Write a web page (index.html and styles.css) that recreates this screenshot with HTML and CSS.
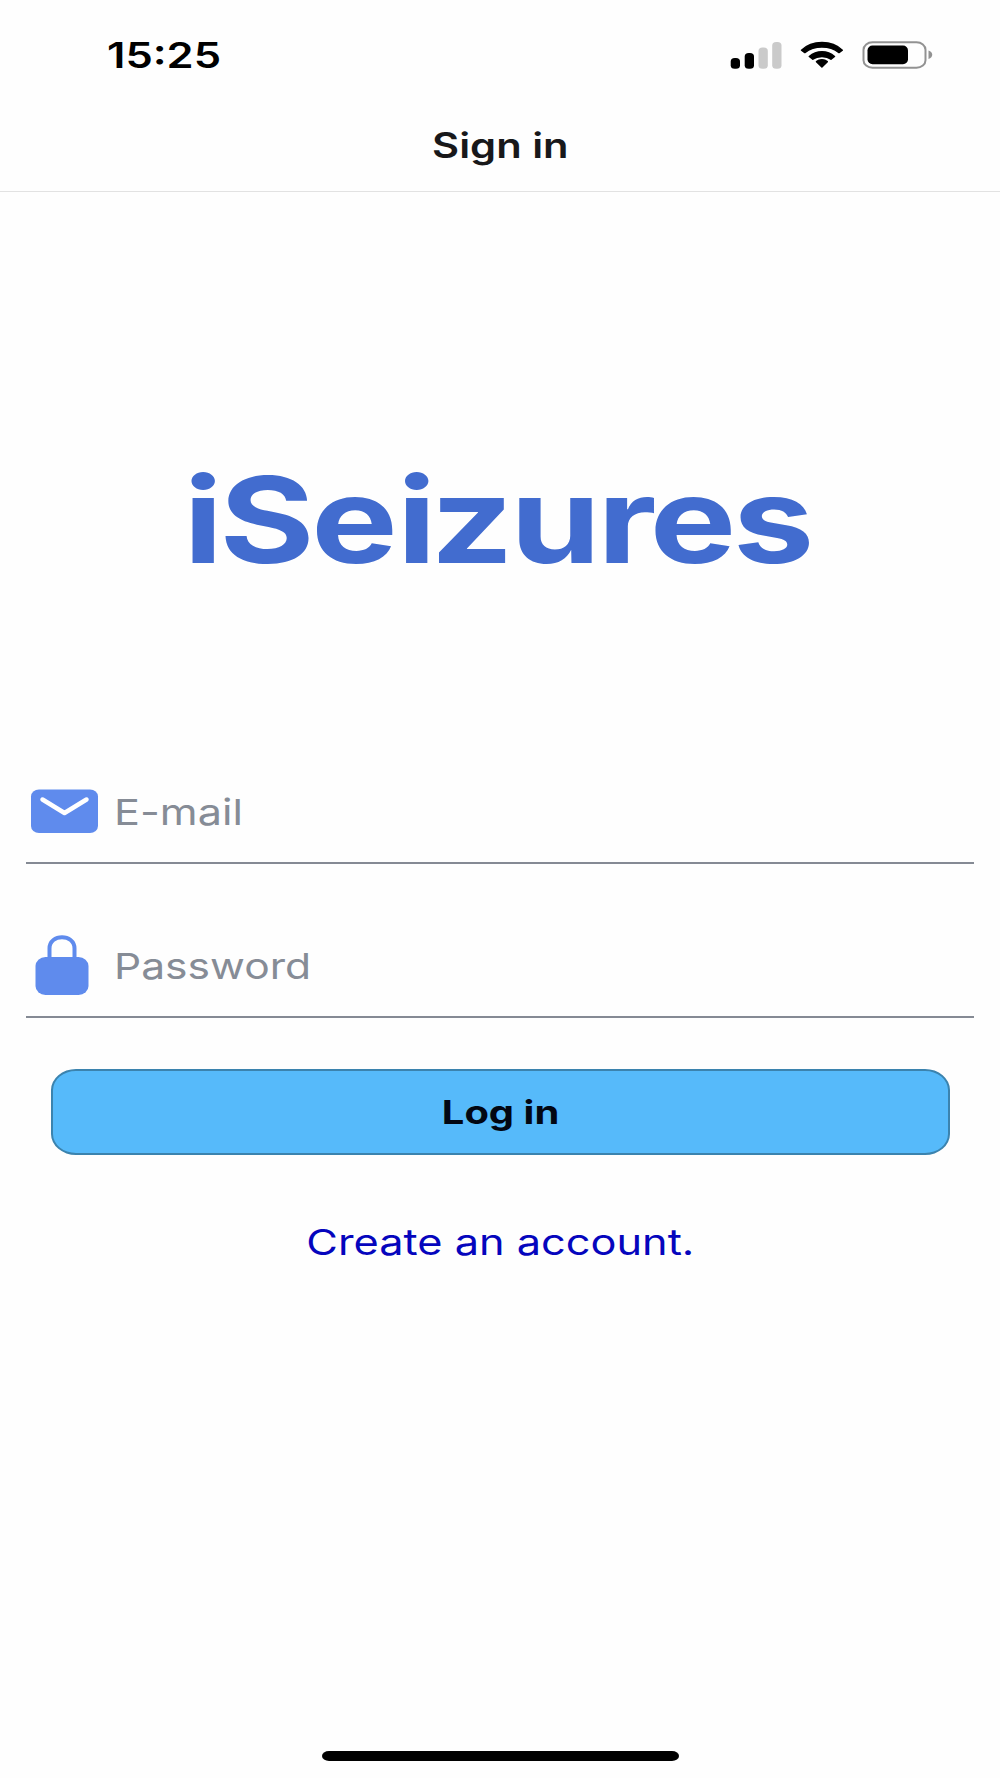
FILE: index.html
```html
<!DOCTYPE html>
<html lang="en">
<head>
<meta charset="utf-8">
<title>Sign in</title>
<link rel="stylesheet" href="styles.css">
</head>
<body>
<div class="screen">
  <div class="status-bar">
    <span class="clock wide">15:25</span>
    <svg class="status-icons" width="206" height="36" viewBox="0 0 206 36">
      <rect x="0.7" y="20" width="9.3" height="10.8" rx="4" ry="3.500"/>
      <rect x="14.7" y="15" width="9.3" height="15.8" rx="4" ry="3.500"/>
      <g fill="#cacaca">
        <rect x="28.5" y="9.5" width="9.3" height="21.3" rx="4" ry="3.500"/>
        <rect x="42.2" y="4" width="9.3" height="26.8" rx="4" ry="3.500"/>
      </g>
      <path d="M71.500 12.200C82 1.800 102 1.800 112.300 12.200L109 14.600C99.500 7.200 84.500 7.200 74.800 14.600Z" stroke="#000" stroke-width="1.500" stroke-linejoin="round"/>
      <path d="M79.300 18.500C86.500 12 97.500 12 104.500 18.500L101 21.200C96.500 17.600 87.500 17.600 82.800 21.200Z" stroke="#000" stroke-width="1.500" stroke-linejoin="round"/>
      <path d="M86.500 23.600C89.500 21.100 94.300 21.100 97.300 23.600L91.900 29Z" stroke="#000" stroke-width="1.500" stroke-linejoin="round"/>
      <rect x="133.500" y="4.200" width="62" height="25.500" rx="9" ry="7.500" fill="none" stroke="#929292" stroke-width="2"/>
      <rect x="137.500" y="7.500" width="40.500" height="18.800" rx="5"/>
      <path d="M198.500 12.500C203.500 14 203.500 19.500 198.500 21Z" fill="#929292"/>
    </svg>
  </div>
  <header class="header"><span class="header-title wide">Sign in</span></header>
  <main class="content">
    <h1 class="brand"><span class="brand-name wide">iSe<span class="brand-i">i</span>zures</span></h1>
    <div class="field field-email">
      <svg class="field-icon" width="80" height="64" viewBox="0 0 80 64">
        <rect x="5" y="9.500" width="67" height="43.500" rx="8" ry="7" fill="#5f8bed"/>
        <path d="M16.500 19.500L38.500 33L60.500 19.500" fill="none" stroke="#fff" stroke-width="4.500" stroke-linecap="round" stroke-linejoin="round"/>
      </svg>
      <span class="field-label email-label wide">E-mail</span>
    </div>
    <div class="field field-password">
      <svg class="field-icon" width="80" height="64" viewBox="0 0 80 64">
        <path d="M23.500 26V14.500C23.500 -0.500 48.500 -0.500 48.500 14.500V26" fill="none" stroke="#5f8bed" stroke-width="4"/>
        <rect x="9.500" y="23" width="53" height="38" rx="10" ry="9" fill="#5f8bed"/>
      </svg>
      <span class="field-label password-label wide">Password</span>
    </div>
    <button class="login"><span class="login-text wide">Log in</span></button>
    <a class="create"><span class="create-text wide">Create an account.</span></a>
  </main>
  <div class="home-bar"></div>
</div>
</body>
</html>
```
FILE: styles.css
```css
* { box-sizing: border-box; }
body {
  margin: 0;
  background: #fefefe;
  color: #000;
  font-family: Inter, "Liberation Sans", sans-serif;
}
.screen {
  width: 1000px;
  height: 1778px;
  display: flex;
  flex-direction: column;
  overflow: hidden;
}
.wide {
  display: inline-block;
  white-space: nowrap;
}
.status-bar {
  height: 99px;
  padding: 12px 64px 0 107px;
  display: flex;
  align-items: center;
  justify-content: space-between;
}
.clock {
  margin-top: -1px;
  font-size: 35px;
  font-weight: 600;
  transform: scaleX(1.242);
  transform-origin: left;
}
.header {
  height: 93px;
  border-bottom: 1px solid #e2e2e2;
  display: flex;
  align-items: center;
  justify-content: center;
}
.header-title {
  font-size: 35px;
  font-weight: 600;
  color: #18181a;
  transform: scaleX(1.19);
}
.content {
  display: flex;
  flex-direction: column;
  padding: 256px 26px 0 26px;
}
.brand {
  margin: 0 0 170px;
  text-align: center;
  font-size: 119px;
  line-height: 144px;
  font-weight: 700;
  letter-spacing: -2.7px;
  color: #426ccf;
}
.brand-name { transform: translateX(-3px) scaleX(1.22); }
.brand-i {
  margin-left: 2px;
  margin-right: -2px;
}
.field {
  display: flex;
  align-items: center;
  border-bottom: 2px solid #858a94;
}
.field-email {
  height: 102px;
  margin-bottom: 51px;
}
.field-password {
  height: 103px;
  margin-bottom: 51px;
}
.field-icon { flex: none; }
.field-label {
  margin-left: 8px;
  font-size: 36px;
  color: #868c96;
  transform: scaleX(1.2);
  transform-origin: left;
}
.password-label { transform: scaleX(1.183); }
.login {
  height: 86px;
  margin: 0 24px 55px 25px;
  padding: 0;
  border: 2px solid #3b83ae;
  border-radius: 25px / 21px;
  background: #56bafa;
  color: #020712;
  font-family: inherit;
  font-size: 33px;
  font-weight: 700;
}
.login-text { transform: scaleX(1.21); }
.create {
  line-height: 64px;
  text-align: center;
  font-size: 36px;
  color: #0505bd;
}
.create-text { transform: scaleX(1.203); }
.home-bar {
  width: 357px;
  height: 10px;
  margin: auto auto 17px 322px;
  border-radius: 7px / 5px;
  background: #000;
}
```
